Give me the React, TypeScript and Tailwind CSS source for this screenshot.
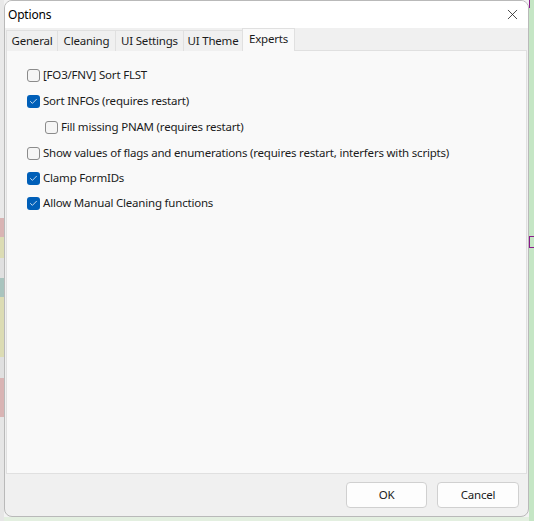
import { Check, X } from "lucide-react";

interface OptionRowProps {
	label: string;
	checked?: boolean;
	indent?: boolean;
	className?: string;
}

const Checkbox = ({ checked }: { checked?: boolean }) =>
	checked ? (
		<span className="flex h-[13px] w-[13px] items-center justify-center rounded-[3px] bg-[#005fb8]">
			<Check size={9} strokeWidth={2} className="text-white" />
		</span>
	) : (
		<span className="h-[13px] w-[13px] rounded-[3px] border border-[#8b8b8b] bg-[#f5f5f5]" />
	);

const OptionRow = ({ label, checked, indent, className }: OptionRowProps) => (
	<div className={`flex h-[20px] items-center ${indent ? "ml-[18px]" : ""} ${className ?? ""}`}>
		<Checkbox checked={checked} />
		<span className="ml-[3px] text-[11.5px] tracking-[-0.2px] text-[#1b1b1b]">{label}</span>
	</div>
);

const tabs = [
	{ name: "General", w: "w-[52px]" },
	{ name: "Cleaning", w: "w-[59px]" },
	{ name: "UI Settings", w: "w-[69px]" },
	{ name: "UI Theme", w: "w-[60px]" },
];

const App = () => (
	<div
		className="flex h-[521px] w-[534px] bg-[#f3f3f3]"
		style={{ fontFamily: '"Noto Sans", "Open Sans", sans-serif' }}
	>
		{/* left strip of the window behind */}
		<div className="flex w-[4px] flex-col">
			<div className="h-[218px] bg-[#e9e9e9]" />
			<div className="h-[19px] bg-[#d9b4b4]" />
			<div className="h-[21px] bg-[#dcdcb4]" />
			<div className="h-[20px] bg-[#e0e0e0]" />
			<div className="h-[19px] bg-[#a9c4be]" />
			<div className="h-[60px] bg-[#dcdcb4]" />
			<div className="h-[21px] bg-[#e0e0e0]" />
			<div className="h-[39px] bg-[#d9b4b4]" />
			<div className="flex-1 bg-[#e6e6e6]" />
		</div>

		<div className="flex w-[525px] flex-col">
			<div className="flex h-[517px] flex-col overflow-hidden rounded-[8px] border border-[#b9b9b9] bg-[#f0f0f0]">
				{/* title bar */}
				<div className="flex h-[27px] items-center justify-between bg-white pl-[3px] pr-[7px]">
					<span className="text-[12px] tracking-[-0.2px] text-black">Options</span>
					<X size={17} strokeWidth={1.1} className="text-[#1b1b1b]" />
				</div>

				{/* tabs */}
				<div className="relative z-10 -mb-px ml-[1px] flex h-[23px] items-end">
					{tabs.map((tab) => (
						<div
							key={tab.name}
							className={`${tab.w} flex h-[21px] items-center justify-center border border-b-0 border-[#e0e0e0] bg-[#f0f0f0] -ml-px first:ml-0 text-[11.5px] tracking-[-0.2px] text-[#1b1b1b]`}
						>
							{tab.name}
						</div>
					))}
					<div className="flex h-[23px] w-[53px] items-center justify-center border border-b-0 border-[#e0e0e0] bg-[#f9f9f9] -ml-px pb-[2px] text-[11.5px] tracking-[-0.2px] text-[#1b1b1b]">
						Experts
					</div>
				</div>

				{/* tab panel */}
				<div className="mx-[1px] flex h-[424px] flex-col border border-[#e0e0e0] bg-[#f9f9f9] pl-[20px] pt-[14px]">
					<OptionRow label="[FO3/FNV] Sort FLST" />
					<OptionRow label="Sort INFOs (requires restart)" checked className="mt-[6px]" />
					<OptionRow label="Fill missing PNAM (requires restart)" indent className="mt-[6px]" />
					<OptionRow
						label="Show values of flags and enumerations (requires restart, interfers with scripts)"
						className="mt-[6px]"
					/>
					<OptionRow label="Clamp FormIDs" checked className="mt-[5px]" />
					<OptionRow label="Allow Manual Cleaning functions" checked className="mt-[5px]" />
				</div>

				{/* buttons */}
				<div className="flex justify-end gap-[10px] pr-[9px] pt-[8px]">
					<button className="h-[26px] w-[81px] rounded-[4px] border border-[#d0d0d0] bg-[#fdfdfd] text-[11.5px] tracking-[-0.2px] text-[#1b1b1b]">
						OK
					</button>
					<button className="h-[26px] w-[82px] rounded-[4px] border border-[#d0d0d0] bg-[#fdfdfd] text-[11.5px] tracking-[-0.2px] text-[#1b1b1b]">
						Cancel
					</button>
				</div>
			</div>
			<div className="flex-1 bg-[#e3efe0]" />
		</div>

		{/* right strip of the window behind */}
		<div className="flex w-[5px] flex-col bg-[#c5e6c5]">
			<div className="h-[8px] border-l border-[#8a1a8a]" />
			<div className="mt-[228px] h-[12px] border-y border-l border-[#8a1a8a]" />
		</div>
	</div>
);

export default App;
